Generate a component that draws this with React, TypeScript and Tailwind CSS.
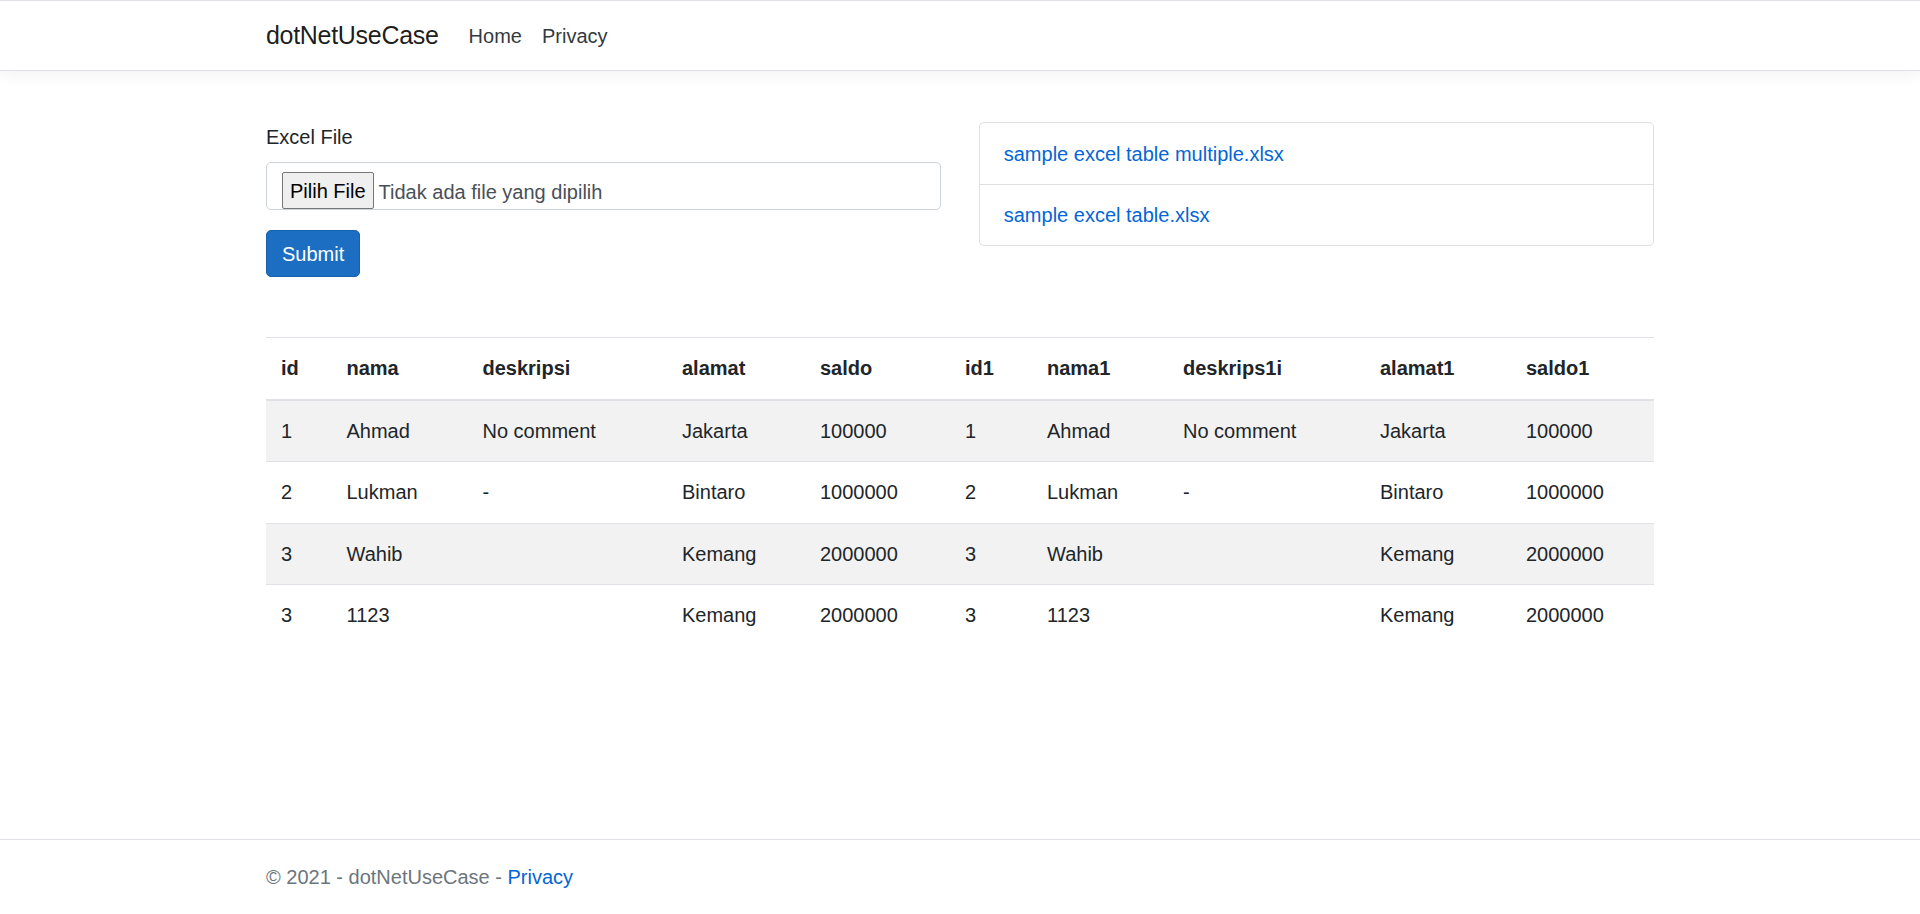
const columns = [
  { key: 'id', w: 'w-[65.5px]' },
  { key: 'nama', w: 'w-[136px]' },
  { key: 'deskripsi', w: 'w-[199.5px]' },
  { key: 'alamat', w: 'w-[138px]' },
  { key: 'saldo', w: 'w-[145px]' },
  { key: 'id1', w: 'w-[82px]' },
  { key: 'nama1', w: 'w-[136px]' },
  { key: 'deskrips1i', w: 'w-[197px]' },
  { key: 'alamat1', w: 'w-[146px]' },
  { key: 'saldo1', w: 'w-[143px]' },
];

const rows = [
  ['1', 'Ahmad', 'No comment', 'Jakarta', '100000', '1', 'Ahmad', 'No comment', 'Jakarta', '100000'],
  ['2', 'Lukman', '-', 'Bintaro', '1000000', '2', 'Lukman', '-', 'Bintaro', '1000000'],
  ['3', 'Wahib', '', 'Kemang', '2000000', '3', 'Wahib', '', 'Kemang', '2000000'],
  ['3', '1123', '', 'Kemang', '2000000', '3', '1123', '', 'Kemang', '2000000'],
];

const files = ['sample excel table multiple.xlsx', 'sample excel table.xlsx'];

export default function App() {
  return (
    <div className="flex h-[914px] flex-col bg-white font-['Liberation_Sans',Arial,sans-serif] text-[20px] leading-[30px] text-[#212529]">
      {/* Navbar */}
      <header className="mb-[21px] h-[71px] border-t border-b border-[#dee2e6] bg-white shadow-[0_5px_15px_rgba(0,0,0,0.05)]">
        <nav className="mx-auto flex h-full w-[1388px] items-center">
          <a href="#" className="mr-[20px] text-[25px] leading-[37px] tracking-[-0.3px] text-black/90">
            dotNetUseCase
          </a>
          <ul className="flex">
            <li>
              <a href="#" className="px-[10px] text-[#343a40]">Home</a>
            </li>
            <li>
              <a href="#" className="px-[10px] text-[#343a40]">Privacy</a>
            </li>
          </ul>
        </nav>
      </header>

      <main className="mx-auto w-[1388px] flex-1">
        {/* Upload form + sample files */}
        <div className="grid grid-cols-2 gap-x-[37.5px] pt-[30px]">
          <form>
            <label className="mb-[10px] block">Excel File</label>
            <div className="mb-[20px] h-[47.5px] rounded-[5px] border border-[#ced4da] px-[15px] pt-[8.5px]">
              <div className="flex h-[37px] items-center">
                <span className="flex h-full items-center rounded-[2px] border border-[#767676] bg-[#efefef] px-[7px] pt-[1px] text-black">
                  Pilih File
                </span>
                <span className="ml-[5px] pt-[3px] text-[#495057]">Tidak ada file yang dipilih</span>
              </div>
            </div>
            <button
              type="button"
              className="h-[47.5px] rounded-[5px] border border-[#1861ac] bg-[#1b6ec2] px-[15px] pt-[1px] text-white"
            >
              Submit
            </button>
          </form>

          <ul className="self-start rounded-[5px] border border-black/[0.125]">
            {files.map((f, i) => (
              <li
                key={f}
                className={`flex h-[61px] items-center px-[24px] ${i > 0 ? 'border-t border-black/[0.125]' : ''}`}
              >
                <a href="#" className="text-[#0366d6]">{f}</a>
              </li>
            ))}
          </ul>
        </div>

        {/* Data table */}
        <table className="mt-[60px] w-full table-fixed border-collapse">
          <colgroup>
            {columns.map((c) => (
              <col key={c.key} className={c.w} />
            ))}
          </colgroup>
          <thead>
            <tr>
              {columns.map((c) => (
                <th
                  key={c.key}
                  className="border-t border-b-2 border-[#dee2e6] px-[15px] py-[15.25px] text-left font-bold"
                >
                  {c.key}
                </th>
              ))}
            </tr>
          </thead>
          <tbody>
            {rows.map((r, i) => (
              <tr key={i} className={i % 2 === 0 ? 'bg-[#f2f2f2]' : ''}>
                {r.map((v, j) => (
                  <td key={j} className="whitespace-nowrap border-t border-[#dee2e6] px-[15px] py-[15.25px]">
                    {v}
                  </td>
                ))}
              </tr>
            ))}
          </tbody>
        </table>
      </main>

      {/* Footer */}
      <footer className="h-[75px] border-t border-[#dee2e6] leading-[75px] text-[#6c757d]">
        <div className="mx-auto w-[1388px] whitespace-nowrap">
          &copy; 2021 - dotNetUseCase - <a href="#" className="text-[#0366d6]">Privacy</a>
        </div>
      </footer>
    </div>
  );
}
